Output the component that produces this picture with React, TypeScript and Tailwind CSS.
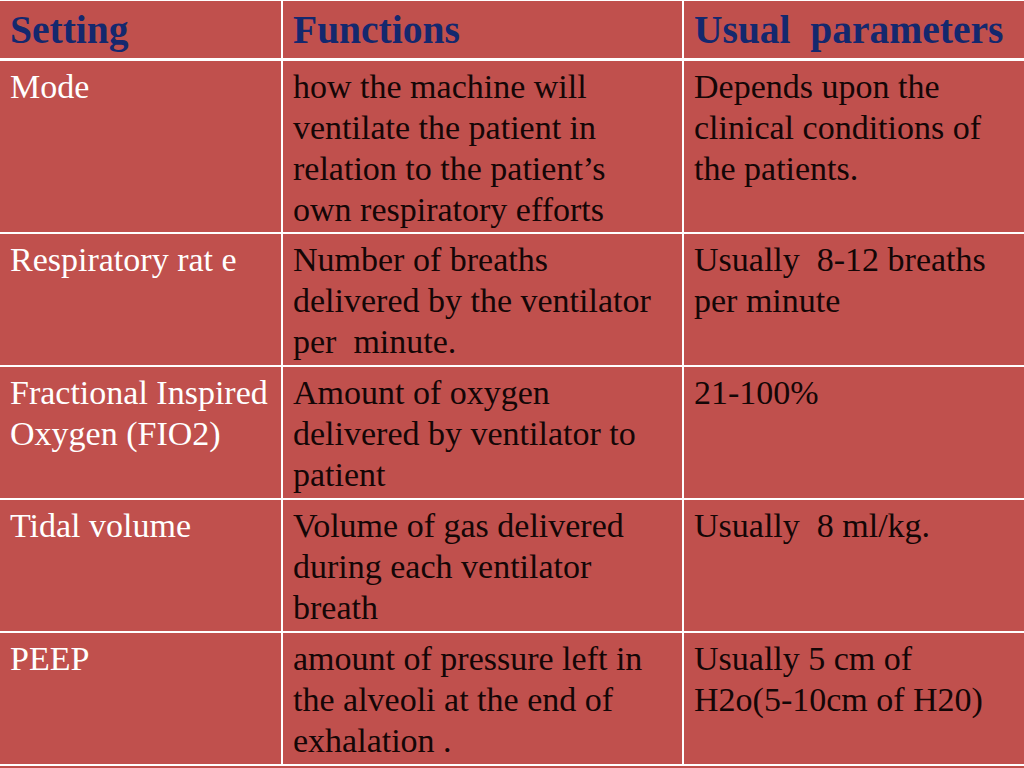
const HEADERS = ["Setting", "Functions", "Usual  parameters"];

// each row: [setting lines, function lines, parameter lines], plus row height
const ROWS: { h: string; cells: string[][] }[] = [
  {
    h: "h-[171px]",
    cells: [
      ["Mode"],
      [
        "how the machine will",
        "ventilate the patient in",
        "relation to the patient\u2019s",
        "own respiratory efforts",
      ],
      ["Depends upon the", "clinical conditions of", "the patients."],
    ],
  },
  {
    h: "h-[131px]",
    cells: [
      ["Respiratory rat e"],
      ["Number of breaths", "delivered by the ventilator", "per  minute."],
      ["Usually  8-12 breaths", "per minute"],
    ],
  },
  {
    h: "h-[131px]",
    cells: [
      ["Fractional Inspired", "Oxygen (FIO2)"],
      ["Amount of oxygen", "delivered by ventilator to", "patient"],
      ["21-100%"],
    ],
  },
  {
    h: "h-[131px]",
    cells: [
      ["Tidal volume"],
      ["Volume of gas delivered", "during each ventilator", "breath"],
      ["Usually  8 ml/kg."],
    ],
  },
  {
    h: "h-[131px]",
    cells: [
      ["PEEP"],
      [
        "amount of pressure left in",
        "the alveoli at the end of",
        "exhalation .",
      ],
      ["Usually 5 cm of", "H2o(5-10cm of H20)"],
    ],
  },
];

const COLS = "grid grid-cols-[281px_399px_1fr] gap-x-[2px]";

export default function App() {
  return (
    <div
      className="w-[1024px] h-[768px] overflow-hidden bg-[#c0504d]"
      style={{ fontFamily: '"Liberation Serif", "Times New Roman", serif' }}
    >
      <div className="flex flex-col gap-[2px] bg-white pt-px pb-[2px]">
        {/* header row */}
        <div className={`${COLS} h-[57px] mb-px`}>
          {HEADERS.map((t) => (
            <div
              key={t}
              className="bg-[#c0504d] px-[10px] pt-[6px] text-[39.5px] leading-[47px] font-bold text-[#14286e] whitespace-pre"
            >
              {t}
            </div>
          ))}
        </div>

        {ROWS.map((row, i) => (
          <div key={i} className={`${COLS} ${row.h}`}>
            {row.cells.map((lines, c) => (
              <div
                key={c}
                className={`bg-[#c0504d] px-[10px] pt-[5px] text-[34px] leading-[41px] ${
                  c === 0 ? "text-white" : "text-[#140606]"
                }`}
              >
                {lines.map((l, k) => (
                  <div key={k} className="whitespace-pre">
                    {l}
                  </div>
                ))}
              </div>
            ))}
          </div>
        ))}
      </div>
    </div>
  );
}
